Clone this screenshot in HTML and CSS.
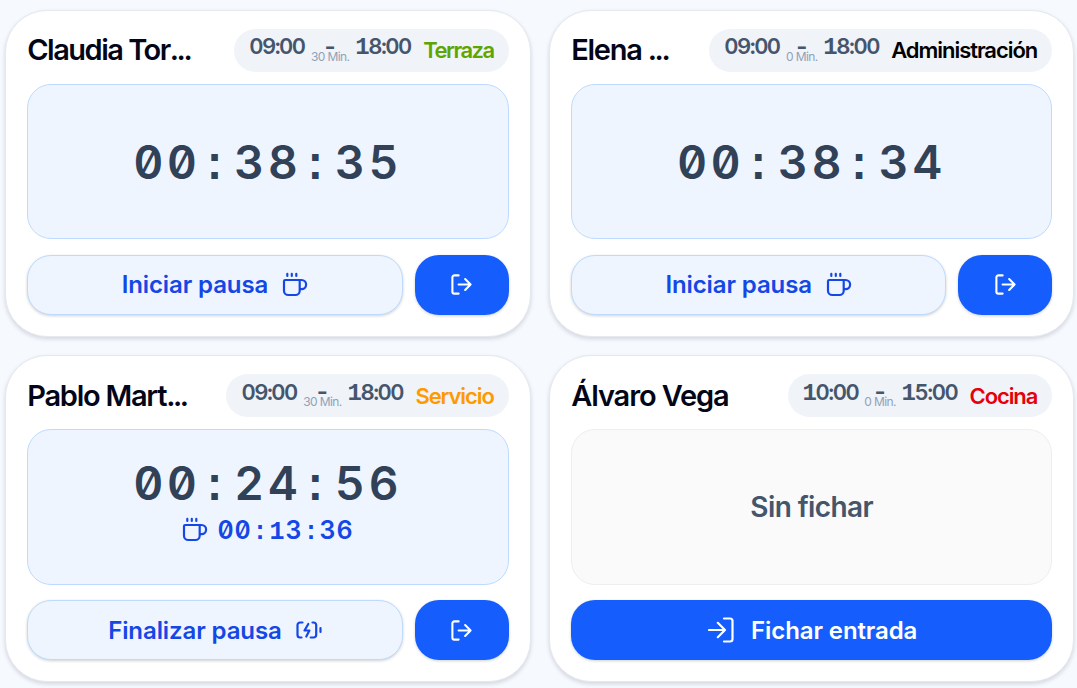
FILE: index.html
```html
<!DOCTYPE html>
<html lang="es">
<head>
<meta charset="utf-8">
<link rel="stylesheet" href="styles.css">
<title>Fichajes</title>
</head>
<body>
<svg class="defs" width="0" height="0">
<symbol id="cup" viewBox="0 0 26 26">
  <path d="M5.3 1.8v2.2M9.8 1.8v2.2M14.3 1.8v2.2M3.2 8h14.5v10.7a4.3 4.3 0 0 1-4.3 4.3H6.3a4.3 4.3 0 0 1-4.3-4.3V9.2A1.2 1.2 0 0 1 3.2 8M17.7 8h1.8a4.6 4.6 0 0 1 0 9.2h-1.8"/>
</symbol>
<symbol id="exit" viewBox="0 0 24 24">
  <path d="M9 2.5H4.5a2 2 0 0 0-2 2v15a2 2 0 0 0 2 2H9M9 12h12.5M15.8 6.3l5.7 5.7-5.7 5.7"/>
</symbol>
<symbol id="enter" viewBox="0 0 26 26">
  <path d="M16 1.5h6a2.5 2.5 0 0 1 2.5 2.5v18a2.5 2.5 0 0 1-2.5 2.5h-6M1 13h16M9.8 5.8l7.2 7.2-7.2 7.2"/>
</symbol>
<symbol id="battery" viewBox="0 0 26 18">
  <path d="M6.5 1.5H4A2.5 2.5 0 0 0 1.5 4v10A2.5 2.5 0 0 0 4 16.5h1.5M16.5 1.5h1.2A2.5 2.5 0 0 1 20.2 4v10a2.5 2.5 0 0 1-2.5 2.5h-3M12.3 3L8.5 9.5h4.9L10.3 15.5M24.5 7v4"/>
</symbol>
</svg>
<div id="content">

<div class="card">
  <div class="head">
    <h2 class="tight">Claudia Tor<span class="dots">...</span></h2>
    <div class="shift">
      <span class="time">09:00</span><span class="break"><b>-</b><small>30 Min.</small></span><span class="time"><i>1</i>8:00</span>
      <span class="area terraza">Terraza</span>
    </div>
  </div>
  <div class="panel"><div class="clock">00<i>:</i>38<i>:</i>35</div></div>
  <div class="buttons">
    <button class="pause"><span>Iniciar pausa</span><svg class="cup"><use href="#cup"/></svg></button>
    <button class="out"><svg class="exit"><use href="#exit"/></svg></button>
  </div>
</div>

<div class="card">
  <div class="head">
    <h2>Elena <span class="dots">...</span></h2>
    <div class="shift">
      <span class="time">09:00</span><span class="break zero"><b>-</b><small>0 Min.</small></span><span class="time"><i>1</i>8:00</span>
      <span class="area admin">Administración</span>
    </div>
  </div>
  <div class="panel"><div class="clock">00<i>:</i>38<i>:</i>34</div></div>
  <div class="buttons">
    <button class="pause"><span>Iniciar pausa</span><svg class="cup"><use href="#cup"/></svg></button>
    <button class="out"><svg class="exit"><use href="#exit"/></svg></button>
  </div>
</div>

<div class="card">
  <div class="head">
    <h2>Pablo Mart<span class="dots">...</span></h2>
    <div class="shift">
      <span class="time">09:00</span><span class="break"><b>-</b><small>30 Min.</small></span><span class="time"><i>1</i>8:00</span>
      <span class="area servicio">Servicio</span>
    </div>
  </div>
  <div class="panel resting">
    <div class="clock">00<i>:</i>24<i>:</i>56</div>
    <div class="rest"><svg class="cup"><use href="#cup"/></svg><span>00<i>:</i><i>1</i>3<i>:</i>36</span></div>
  </div>
  <div class="buttons">
    <button class="pause"><span>Finalizar pausa</span><svg class="battery"><use href="#battery"/></svg></button>
    <button class="out"><svg class="exit"><use href="#exit"/></svg></button>
  </div>
</div>

<div class="card">
  <div class="head">
    <h2 class="full">Álvaro Vega</h2>
    <div class="shift">
      <span class="time"><i>1</i>0:00</span><span class="break zero"><b>-</b><small>0 Min.</small></span><span class="time"><i>1</i>5:00</span>
      <span class="area cocina">Cocina</span>
    </div>
  </div>
  <div class="panel off"><div class="none">Sin fichar</div></div>
  <div class="buttons">
    <button class="in"><svg class="enter"><use href="#enter"/></svg><span>Fichar entrada</span></button>
  </div>
</div>

</div>
</body>
</html>
```
FILE: styles.css
```css
* { box-sizing: border-box; }
body {
  margin: 0;
  height: 688px;
  overflow: hidden;
  background: #f6f9fe;
  font-family: Inter, "Liberation Sans", sans-serif;
}
.defs { display: block; }
#content {
  display: grid;
  grid-template-columns: 525.5px 525px;
  grid-template-rows: 327px 327px;
  gap: 18.3px 18.5px;
  padding: 9.6px 0 0 5.2px;
}
.card {
  display: flex;
  flex-direction: column;
  padding: 18px 21px 21px;
  border: 1px solid #e4e9f0;
  border-radius: 42px;
  background: #fff;
  box-shadow: 0 2px 4px rgba(15,23,42,0.15);
}
.head {
  display: flex;
  align-items: center;
  justify-content: space-between;
  height: 43.5px;
}
h2 {
  margin: 0;
  font-size: 29px;
  font-weight: 600;
  line-height: 40px;
  letter-spacing: -1.25px;
  color: #020618;
  white-space: nowrap;
}
.tight { letter-spacing: -1.5px; }
.full { letter-spacing: -1.1px; }
.dots { letter-spacing: -2.4px; }
.shift {
  display: flex;
  align-items: center;
  height: 43.5px;
  padding: 0 15px;
  border-radius: 22px;
  background: #f0f3f8;
  white-space: nowrap;
}
i {
  display: inline-block;
  font-family: "Liberation Mono", monospace;
  font-style: normal;
  font-weight: 700;
  text-align: center;
}
.time {
  width: 57px;
  margin-top: -8px;
  font-size: 22px;
  font-weight: 600;
  line-height: 26px;
  letter-spacing: -1.5px;
  color: #45556c;
  font-feature-settings: "tnum";
}
.time i {
  width: 13px;
  font-size: 24px;
  line-height: 20px;
}
.break {
  display: flex;
  flex-direction: column;
  align-items: center;
  width: 38px;
  margin: 0 6px 0 5px;
  color: #45556c;
}
.zero { width: 31px; }
.break b {
  font-size: 24px;
  font-weight: 600;
  line-height: 20px;
  height: 13px;
}
.break small {
  font-size: 12px;
  line-height: 14px;
  letter-spacing: -0.6px;
  color: #90a1b9;
}
.area {
  margin-left: 11px;
  font-size: 22px;
  font-weight: 600;
  letter-spacing: -1.1px;
}
.terraza { color: #5ea500; letter-spacing: -1.5px; }
.admin { color: #000; letter-spacing: -1.05px; }
.servicio { color: #fe9a00; }
.cocina { color: #e7000b; }
.panel {
  display: flex;
  flex-direction: column;
  align-items: center;
  justify-content: center;
  height: 156px;
  margin-top: 12px;
  border: 1px solid #bedbff;
  border-radius: 24px;
  background: #eef5ff;
}
.resting { padding-bottom: 6px; }
.off {
  border-color: #eeeeef;
  background: #fafafa;
}
.clock {
  font-size: 46px;
  font-weight: 600;
  line-height: 52px;
  letter-spacing: 3.9px;
  color: #314158;
  white-space: nowrap;
  font-feature-settings: "tnum", "zero";
}
.clock i {
  width: 33.5px;
  margin: 0 3px 0 -3px;
  line-height: 40px;
  letter-spacing: 0;
}
.rest {
  display: flex;
  align-items: center;
  gap: 9px;
  height: 42px;
  color: #1447e6;
  font-size: 25px;
  font-weight: 600;
  line-height: 30px;
  letter-spacing: 0.8px;
  font-feature-settings: "tnum", "zero";
}
.rest i {
  width: 17px;
  line-height: 24px;
  letter-spacing: 0;
}
.rest span { white-space: nowrap; }
.none {
  font-size: 28px;
  font-weight: 600;
  letter-spacing: -0.6px;
  color: #45556c;
}
.buttons {
  display: flex;
  gap: 12px;
  height: 60px;
  margin-top: 15.5px;
}
button {
  display: flex;
  align-items: center;
  justify-content: center;
  padding: 0;
  border: 0;
  border-radius: 24px;
  background: #155dfc;
  color: #fff;
  font: 600 24px Inter, "Liberation Sans", sans-serif;
  letter-spacing: -0.1px;
  box-shadow: 0 1px 3px rgba(15,23,42,0.2);
}
.pause {
  flex: 1;
  gap: 14px;
  border: 1px solid #bedbff;
  background: #eef5ff;
  color: #1447e6;
}
.out { width: 94px; }
.in { flex: 1; gap: 17px; padding-left: 2px; }
svg {
  fill: none;
  stroke: currentColor;
  stroke-width: 2.2;
  stroke-linecap: round;
  stroke-linejoin: round;
}
.cup { width: 26px; height: 26px; }
.exit { width: 23px; height: 23px; }
.enter { width: 26px; height: 26px; }
.battery { width: 26px; height: 18px; }
```
